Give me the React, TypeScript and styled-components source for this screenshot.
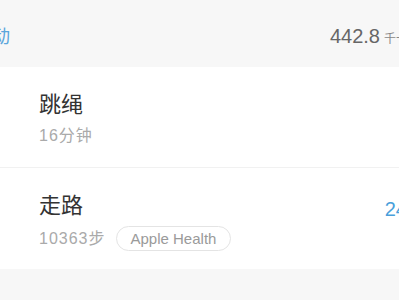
import React from "react";
import styled, { createGlobalStyle } from "styled-components";

const Global = createGlobalStyle`
  html, body {
    margin: 0;
    padding: 0;
    background: #f7f7f7;
    overflow: hidden;
  }
  body {
    font-family: "Liberation Sans", Arial, "Noto Sans CJK SC", sans-serif;
    -webkit-font-smoothing: antialiased;
  }
`;

const Page = styled.div`
  width: 399px;
  height: 300px;
  overflow: hidden;
  background: #f7f7f7;
`;

const Header = styled.div`
  height: 67px;
  box-sizing: border-box;
  padding-top: 6px;
  display: flex;
  align-items: center;
  justify-content: space-between;
`;

const SectionTitle = styled.div`
  margin-left: -26px;
  font-size: 18px;
  line-height: 24px;
  color: #5ba6dc;
  white-space: nowrap;
`;

const Total = styled.div`
  margin-right: -9px;
  display: flex;
  align-items: baseline;
  gap: 4px;
  white-space: nowrap;
`;

const TotalNumber = styled.span`
  font-size: 20px;
  color: #666666;
`;

const TotalUnit = styled.span`
  font-size: 12px;
  color: #888888;
`;

const Card = styled.div`
  background: #ffffff;
`;

const Row = styled.div<{ $last?: boolean }>`
  height: 101px;
  box-sizing: border-box;
  display: flex;
  align-items: flex-start;
  padding: 24px 0 0 39px;
  border-bottom: ${(p) => (p.$last ? "none" : "1px solid #f1f1f1")};
`;

const Info = styled.div`
  flex: 1;
  display: flex;
  flex-direction: column;
  gap: 6px;
`;

const Name = styled.div`
  font-size: 22px;
  line-height: 28px;
  color: #333333;
`;

const Meta = styled.div`
  display: flex;
  align-items: center;
  gap: 10px;
  font-size: 16px;
  line-height: 22px;
  letter-spacing: 1px;
  color: #aaaaaa;
`;

const Source = styled.span`
  display: inline-flex;
  align-items: center;
  height: 25px;
  box-sizing: border-box;
  padding: 0 14px;
  border: 1px solid #e4e4e4;
  border-radius: 13px;
  font-size: 15px;
  letter-spacing: 0;
  color: #9a9a9a;
  white-space: nowrap;
`;

const Value = styled.div`
  margin-top: 3px;
  margin-right: -19px;
  font-size: 20px;
  line-height: 28px;
  color: #4a9fdb;
  white-space: nowrap;
`;

export default function App() {
  return (
    <>
      <Global />
      <Page>
        <Header>
          <SectionTitle>运动</SectionTitle>
          <Total>
            <TotalNumber>442.8</TotalNumber>
            <TotalUnit>千卡</TotalUnit>
          </Total>
        </Header>
        <Card>
          <Row>
            <Info>
              <Name>跳绳</Name>
              <Meta>16分钟</Meta>
            </Info>
          </Row>
          <Row $last>
            <Info>
              <Name>走路</Name>
              <Meta>
                10363步
                <Source>Apple Health</Source>
              </Meta>
            </Info>
            <Value>247</Value>
          </Row>
        </Card>
      </Page>
    </>
  );
}
